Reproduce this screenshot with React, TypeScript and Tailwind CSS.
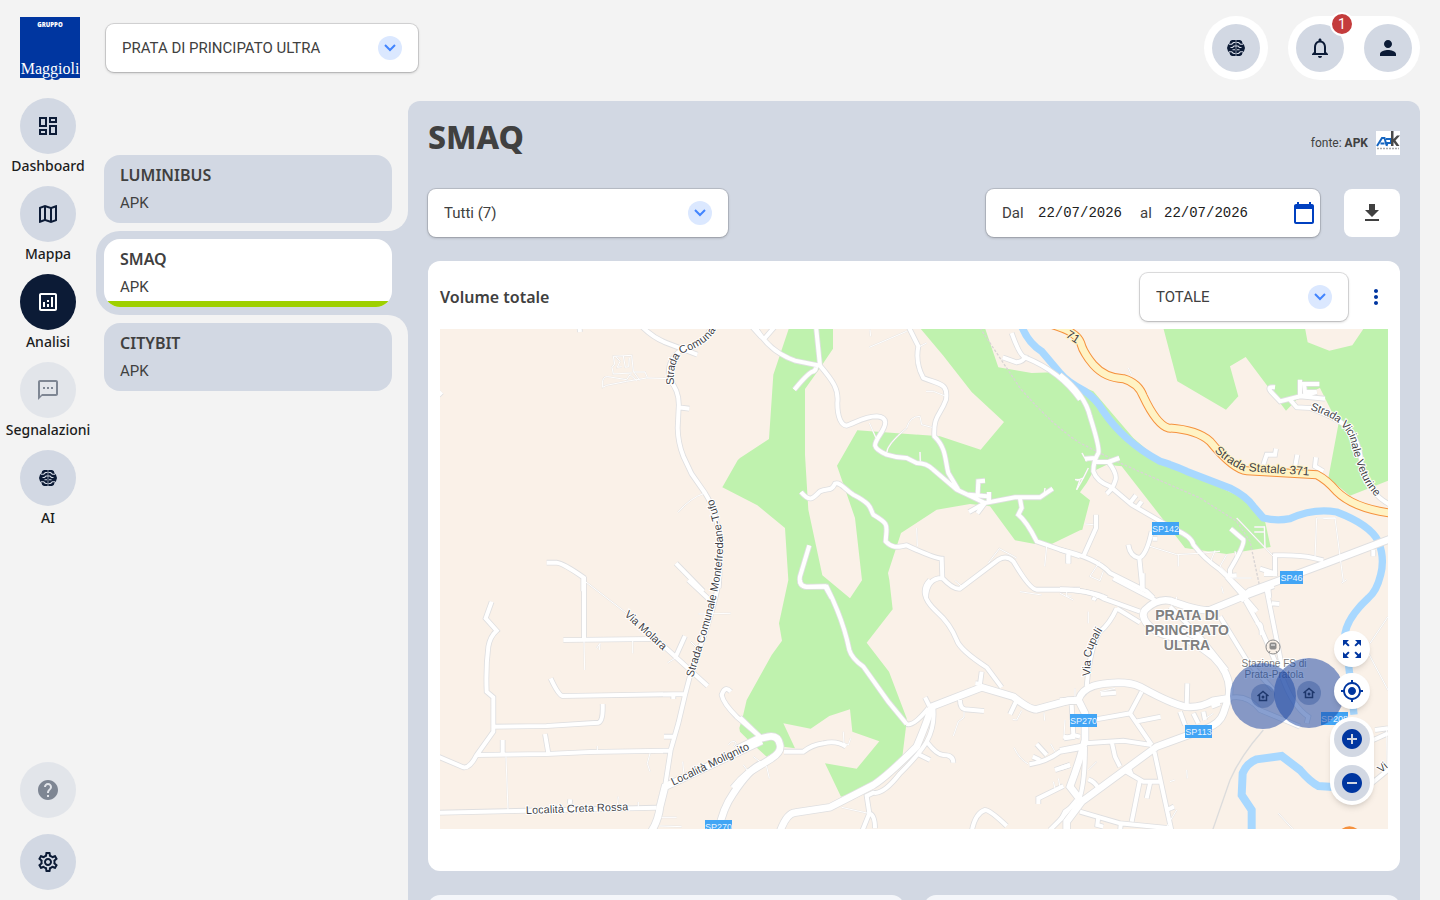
import type { ReactNode } from "react";
import {
    MdAddCircle,
    MdCalendarToday,
    MdDownload,
    MdHelp,
    MdMoreVert,
    MdMyLocation,
    MdNotificationsNone,
    MdOutlineAnalytics,
    MdOutlineDashboard,
    MdOutlineMap,
    MdOutlineSettings,
    MdOutlineTextsms,
    MdPerson,
    MdRemoveCircle,
    MdZoomOutMap,
} from "react-icons/md";

interface NavItem {
    label: string;
    icon: ReactNode;
    active?: boolean;
    disabled?: boolean;
}

interface MapTile {
    x: number;
    y: number;
    lanes?: string;
    streets: string;
    avenues?: string;
}

interface RoadLabel {
    id: string;
    text: string;
    d: string;
    large?: boolean;
}

const navItems: NavItem[] = [
    { label: "Dashboard", icon: <MdOutlineDashboard size={24} /> },
    { label: "Mappa", icon: <MdOutlineMap size={24} /> },
    { label: "Analisi", icon: <MdOutlineAnalytics size={24} />, active: true },
    { label: "Segnalazioni", icon: <MdOutlineTextsms size={24} />, disabled: true },
    { label: "AI", icon: <BrainIcon /> },
];

const sources = [
    { name: "LUMINIBUS", vendor: "APK" },
    { name: "SMAQ", vendor: "APK" },
    { name: "CITYBIT", vendor: "APK" },
];

// tile geometry is stored at three units per map pixel
const tiles: MapTile[] = [
    {
        x: 440,
        y: 328,
        lanes: "M795 495Q750 510 714 553M688 152L620 150L560 160L500 172L488 178L488 158Q492 142 510 147L560 155L570 140L590 158M575 135L520 138L516 118L524 108L520 85L575 82L580 130L600 158M528 86L540 100L532 118L545 116M550 84L556 118L566 116L568 90M580 132L615 132L622 148",
        streets:
            "M815 -5C795 40 770 60 735 62C700 75 680 110 688 155C715 185 718 215 716 240L713 300Q714 345 730 385L755 438L795 495C825 540 842 620 842 680L836 780M605 -5Q640 30 680 45L772 80M935 -5L965 28M716 238L748 242M320 704L350 704Q370 706 430 748L430 790M708 706L790 790M418 -5L420 12M-5 202L5 192",
    },
    {
        x: 440,
        y: 580,
        lanes: "M430 0L560 100M432 180L434 270M198 530L204 690M775 102L872 100M630 520L622 550L630 575M728 545L732 585M665 712L710 712M660 738L725 740M578 180L578 220M470 205L480 190L478 210M472 498L472 515M535 650L532 675M595 666L595 680M865 495Q880 475 888 490L880 500M752 185L772 205M683 248L705 235",
        streets:
            "M838 0C820 90 800 150 780 200L752 280L735 345L715 430L692 510L675 620M155 65L137 115L170 152Q150 170 145 200Q137 260 140 335L160 352L160 455L110 525Q90 565 70 562L-5 530M160 440L320 438L475 428Q490 425 488 372M110 525L320 522L450 516L692 512M188 480L188 522M315 462L325 520M672 470L705 470M332 295Q355 345 368 348L735 342M700 357L700 345M370 180L635 177M432 -10L432 178M640 170L803 318M735 168L708 228M745 0L820 70M-5 698L260 692L650 683M391 658L389 672M872 335Q855 315 845 345Q850 370 890 410L960 470",
        avenues: "M965 483L675 620L660 680Q655 725 630 760M835 760Q845 690 880 640Q930 565 965 552",
    },
    {
        x: 740,
        y: 328,
        lanes: "M388 58L500 10M390 5L392 25M440 375Q440 350 500 300Q510 265 540 265L545 290L575 298M388 285L408 330M540 372L541 400M530 600L532 655M558 190L580 190L618 205M745 705L778 662L830 690M920 655L914 715M915 480L912 500M645 758L665 775M540 55L560 45M1005 455L1020 455L1010 485",
        streets:
            "M45 -5Q85 70 165 98L240 113M75 30L105 -5M228 -5L240 113C280 160 297 185 292 225C292 270 305 292 320 293C345 285 375 265 410 265C445 268 440 290 420 320C400 350 395 360 440 380Q470 390 500 390L530 405Q560 405 580 425L650 485L735 525L825 508L900 508L938 482M228 118Q228 130 215 132Q200 140 163 185M505 -5L535 55Q525 105 550 150C600 170 625 165 618 215C600 265 580 260 583 325C620 360 615 400 625 435L655 485M183 492C210 525 220 510 240 490C265 480 275 490 285 467C300 460 315 485 340 500C400 530 390 545 400 560C450 590 440 590 437 640C460 665 480 655 500 652Q580 690 605 692L607 750Q640 785 660 782L775 695Q800 680 820 700Q870 785 890 785L1020 785M607 750Q560 750 558 810M735 458L715 460L713 500M685 500L745 505L747 525M747 492L747 525M687 552L735 525L712 556M840 512L845 540L835 560Q860 580 890 640L1020 685M985 678L985 707M208 652L180 745Q175 775 200 777L255 775L275 810M815 15Q840 85 855 88Q850 100 830 103L788 88M855 88Q960 130 1020 215",
    },
    {
        x: 740,
        y: 580,
        lanes: "M310 455L312 490L325 495M332 475L325 495M305 682L385 700M672 395L672 412L655 425L640 468M912 398L914 422M822 503Q840 540 865 552M840 35L905 45M980 30L980 48L995 48M40 530L80 560L88 595M10 555L25 575M845 392L830 420L818 418M932 492L945 515M975 420L972 470M1005 325L1005 350M940 605L945 625M955 595L960 620",
        streets:
            "M0 412L60 470M132 515L190 515Q215 495 250 490Q290 480 318 500M580 385Q585 440 560 485Q540 520 480 580Q430 645 400 638L380 648L388 700L366 755M388 700Q405 705 405 745M555 352L568 378M560 485Q590 525 610 525Q640 525 640 548M530 520L570 540M660 360Q660 385 675 388L732 393M828 365L810 403M720 312L725 275M706 310L720 312M785 322L740 262Q660 210 650 180Q630 130 590 95Q530 40 570 0M695 755Q705 700 735 690Q750 690 800 738M868 553Q920 545 960 515L1020 505M890 492L920 525M878 530L900 540M945 570L990 555M895 672L895 655L970 618M930 750L965 715L975 695L1010 670M995 375L1000 465Q990 475 970 470M1000 465L1020 470M500 432Q520 440 565 385M180 0Q180 20 200 20L260 20Q310 120 328 210Q335 235 370 260L445 365L500 432",
        avenues:
            "M-20 625Q0 600 30 575L95 535Q125 515 120 495Q115 465 85 470L50 478L-10 508M120 755Q140 700 165 698L270 682L400 615Q440 590 530 500Q560 430 575 380L725 322L820 350Q870 390 890 388L985 362L1020 362",
    },
    {
        x: 1060,
        y: 328,
        lanes: "M66 375L80 400M85 420L70 450L50 485M70 450L50 458M530 570L640 685M583 597L613 597M583 612L613 612M613 595L615 660M765 690L770 570L825 570L850 760M270 655L350 680L430 675L480 670M355 680L355 715M205 120L215 140M120 700L90 745L120 758L130 730M465 668L450 705M525 670L530 690M860 755L845 765M515 750L575 750M500 680L480 715L505 740M830 570L790 572M75 588L100 590",
        streets:
            "M0 140Q75 200 90 265Q120 360 115 375Q100 400 100 430Q110 460 150 475L215 530L345 605Q395 625 400 650Q430 690 480 725L555 795M75 392L108 390M145 402L178 390M105 402L145 402Q175 440 165 460Q160 480 140 498M228 502L210 525M245 520L230 540M108 560L108 600L70 685M0 665Q110 690 150 735L260 790L280 810M275 610Q260 680 238 690L248 790M238 690Q210 685 205 650M278 632L292 632M0 785Q80 785 140 810M25 680L25 705M512 602L550 635Q555 650 510 725L510 745M500 745L530 742M790 697L760 690Q720 680 645 682L645 745M600 722L650 738M612 738L650 738M625 780L628 810M645 178Q620 175 632 190L660 220L720 205L795 212M720 155L720 205L770 192L735 192L732 168L778 168M690 215L710 238L750 240Q860 280 880 320Q905 370 905 420Q930 500 990 530M610 410L620 380L645 380L648 362M705 418L712 380M790 430L765 415L768 388M940 665L940 685",
        avenues: "M990 633L800 705L570 790L540 815",
    },
    {
        x: 1060,
        y: 580,
        lanes: "M930 190L984 110M920 210L984 330M655 700L710 760M85 95L85 130M95 60L130 45M350 50L345 75M485 20L490 40M0 40L40 60M980 450L982 560M345 600L330 605M380 570L382 595M30 440L30 420M325 495L340 480M120 335L165 325M350 690L320 740M85 570L110 545M430 420L460 400",
        streets:
            "M0 28Q90 30 130 55L240 95M105 52L100 60M160 -5L285 60M248 -20L248 30M170 85Q150 130 120 155Q90 200 80 320M170 85L240 128M500 -10L590 95M480 110L560 240L640 330M555 60L600 140L670 300M620 30L650 180L670 280M635 70L658 72M330 80L420 170L500 270M360 150L440 190M590 135Q605 120 605 165M505 355Q560 340 600 390L720 440M670 300Q700 380 745 410L740 430M75 490L190 482L275 495M110 418L210 400L245 335M210 400L275 495M225 425L302 410M155 485L165 530L180 560M360 395L375 435M380 375L382 310M283 515L335 755M190 570L250 605L305 605M240 600L215 725M60 695L180 730L330 745M0 720L50 660M0 510L75 495M12 475L45 470M0 565L30 555M400 400L415 430M430 395L435 420M75 500Q75 600 60 650M122 342L168 338M260 655L270 610M320 690L342 680M85 598Q105 605 115 625M205 560L215 585M984 445L945 450M940 480L984 460M935 610Q960 590 990 565M115 710L112 735L130 740M182 735L180 755M455 380L480 370",
        avenues:
            "M0 365L55 360C70 315 120 310 175 308Q215 308 240 320Q330 370 375 380Q420 385 460 362L505 355Q520 290 460 230Q380 165 330 170C260 150 240 110 255 90Q290 55 330 62Q420 95 450 90L560 45L640 15M505 355L490 400Q480 430 440 445L290 500L65 665L20 725L20 760M55 360L75 400L75 480Q60 540 30 620L65 665",
    },
];

const roadLabels: RoadLabel[] = [
    {
        id: "montefredane",
        text: "Strada Comunale Montefredane-Tufo",
        d: "M690 677C708 620 720 580 720 545C720 525 713 508 708 492",
    },
    {
        id: "comunale",
        text: "Strada Comuna",
        d: "M671 385C669 362 677 351 688 348C701 342 707 338 712 330L730 306",
    },
    { id: "molara", text: "Via Molara", d: "M626 613L672 655" },
    { id: "molignito", text: "Località Molignito", d: "M672 783L762 740" },
    { id: "creta", text: "Località Creta Rossa", d: "M526 811L640 807" },
    { id: "cupali", text: "Via Cupali", d: "M1087 676L1088 656Q1091 640 1106 620" },
    {
        id: "statale",
        text: "Strada Statale 371",
        d: "M1216 449Q1232 463 1244 468L1318 473",
        large: true,
    },
    {
        id: "vicinale",
        text: "Strada Vicinale Veturine",
        d: "M1311 407C1335 414 1352 425 1355 446C1362 470 1364 484 1388 504",
    },
    { id: "south", text: "Vi", d: "M1379 771L1395 758" },
    { id: "north", text: "71", d: "M1067 334L1087 347", large: true },
];

const shields = [
    { text: "SP142", x: 1152, y: 522 },
    { text: "SP46", x: 1280, y: 571 },
    { text: "SP270", x: 1070, y: 714 },
    { text: "SP113", x: 1185, y: 725 },
    { text: "SP208", x: 1321, y: 712 },
    { text: "SP270", x: 705, y: 820 },
];

const stations = [
    { x: 1263, y: 696, r: 33 },
    { x: 1309, y: 693, r: 35 },
];

const WOODS =
    "M147 0L100 140L87 333L0 390L-7 397L-53 478L52 532L135 600L145 756L117 886L126 938L95 981L20 1116L8 1168L-2 1200L0 1211L25 1236L80 1286L130 1256L165 1261L130 1186L212 1202L268 1164L330 1144L337 1211L418 1240L350 1322L255 1306L303 1406L395 1371L430 1346L487 1286L498 1196L500 1171L447 1031L380 944L458 844L448 756L444 735L483 615L590 545L690 528L750 535L825 637L885 648L935 648L1020 607L1027 605L1050 517L1020 493L1040 465L1060 430L1100 410L1145 415L1270 575L1335 660L1460 678L1592 657L1575 580L1530 520L1400 460L1260 400L1180 330L1120 260L1060 190L1000 165L940 133L875 135L775 118L735 0L540 0L610 83L695 192L792 282L722 365L600 325L352 307L291 413L345 570L366 757L330 811L247 742L205 545L195 380L195 183L240 120L279 62L279 0Z";

const WOODS_EAST =
    "M310 0L352 160L498 245L535 205L510 115L557 87L678 248L720 205L780 180L835 290L805 450L870 503L990 456L990 0L912 0L877 52L808 68L743 43L735 0Z";

const RIVER =
    "M-115 -5Q-95 45 -55 70L0 135Q20 160 75 190Q110 215 130 250Q190 340 300 400Q350 415 380 430L510 480Q560 505 580 535L610 570Q650 580 690 572Q760 540 830 552Q930 590 955 640Q975 690 962 740Q950 790 925 810Q865 865 855 916L868 1030L882 1160";

const RIVER_SOUTH =
    "M575 765L575 690L545 645L548 580Q560 550 590 538L665 528L720 570Q750 605 775 618L830 622";

const STATE_ROAD =
    "M-30 -12Q50 10 62 45Q70 75 100 110Q135 150 190 152Q235 165 250 205Q290 290 325 300Q410 305 450 340Q520 425 560 428L770 440Q800 455 830 490Q880 540 990 555";

function BrainIcon() {
    return (
        <svg width="24" height="24" viewBox="0 0 24 24" fill="currentColor" aria-hidden="true">
            <path d="M11.700 4H8L6.200 5L5.400 7.500L4 8.700L3 12L4 15.300L5.400 16.500L6.200 19L8 20H11.700Z" />
            <path d="M12.300 4H16L17.800 5L18.600 7.500L20 8.700L21 12L20 15.300L18.600 16.500L17.800 19L16 20H12.300Z" />
            <g fill="none" stroke="#d2d8e3" strokeWidth="1.100">
                <path d="M5 8.200H7.700L9.500 6.500M9.500 6.500L11.500 6.500M19 8.200H16.300L14.500 6.500M14.500 6.500L12.500 6.500" />
                <path d="M5 15.800H7.700L9.500 17.500M9.500 17.500H11.500M19 15.800H16.300L14.500 17.500M14.500 17.500H12.500" />
                <path d="M6.500 11.500H8.500L10 10H14L15.500 11.500H17.500M8.500 13.800H11M15.500 13.800H13" />
            </g>
        </svg>
    );
}

function Logo() {
    return (
        <svg width="60" height="63" viewBox="0 0 60 63" role="img" aria-label="Gruppo Maggioli">
            <rect width="60" height="61" fill="#0036a0" />
            <ellipse cx="28" cy="60" rx="4" ry="3" fill="#0036a0" />
            <ellipse cx="36" cy="60" rx="4" ry="3" fill="#0036a0" />
            <text
                x="30"
                y="10"
                textAnchor="middle"
                fill="#fff"
                className="font-['Noto_Sans',sans-serif] text-[6px] font-black"
            >
                GRUPPO
            </text>
            <text
                x="30"
                y="57"
                textAnchor="middle"
                fill="#fff"
                className="font-['Liberation_Serif',serif] text-[16px]"
            >
                Maggioli
            </text>
        </svg>
    );
}

function ApkLogo() {
    return (
        <svg width="24" height="24" viewBox="0 0 24 24" role="img" aria-label="APK">
            <rect width="24" height="24" fill="#fff" />
            <path
                d="M1 15L6 7H8.500L10.500 14M4.500 12.500H8.500M10 8H15V12H11.500L10.500 15"
                fill="none"
                stroke="#1565c0"
                strokeWidth="2"
            />
            <path d="M15 0H17.500V8L21 4.500H24L19.500 9.500L23.500 15H20.500L17.500 11V15H15Z" fill="#4a4a4a" />
            <path d="M1 17.500H23" stroke="#aaa" strokeWidth="1.500" strokeDasharray="2 1" />
        </svg>
    );
}

function Dropdown({ label, option, className }: { label: string; option: string; className: string }) {
    return (
        <div
            className={`relative h-12 rounded-lg bg-white shadow-[0_0_0_1px_rgba(60,60,70,0.16),0_1px_3px_rgba(0,0,0,0.22)] ${className}`}
        >
            <select
                aria-label={label}
                className="h-full w-full appearance-none rounded-lg bg-transparent pr-12 pl-4 text-[15px] text-[#404040] outline-none"
            >
                <option>{option}</option>
            </select>
            <span className="pointer-events-none absolute top-3 right-4 flex h-6 w-6 items-center justify-center rounded-full bg-[#dbe8ff] text-[#4285ff]">
                <svg width="12" height="8" viewBox="0 0 12 8" fill="none" aria-hidden="true">
                    <path d="M1 1L6 6L11 1" stroke="currentColor" strokeWidth="2" />
                </svg>
            </span>
        </div>
    );
}

function TownMap() {
    return (
        <svg
            viewBox="440 329 948 500"
            preserveAspectRatio="xMidYMid slice"
            className="block h-[500px] w-full"
            role="img"
            aria-label="Mappa di Prata di Principato Ultra"
        >
            <rect x="440" y="329" width="948" height="500" fill="#faf1e8" />
            <g transform="translate(740 328) scale(0.333333)">
                <path d={WOODS} fill="#bff2ae" />
            </g>
            <g transform="translate(1060 328) scale(0.333333)" fill="none">
                <path d={WOODS_EAST} fill="#bff2ae" />
                <path d={RIVER} stroke="#a8d8ff" strokeWidth="22" />
                <path
                    d="M-240 0L-120 180Q-20 295 60 345L180 405L420 510L530 580L570 640L600 780"
                    stroke="#d8d4d4"
                    strokeWidth="4"
                    strokeDasharray="8 5"
                />
            </g>
            <g transform="translate(1060 580) scale(0.333333)" fill="none">
                <path d={RIVER_SOUTH} stroke="#a8d8ff" strokeWidth="24" />
                <path d="M610 450Q540 530 510 600L458 750" stroke="#dcdcdc" strokeWidth="4" />
            </g>
            {tiles.map((tile) => (
                <g
                    key={`casing-${tile.x}-${tile.y}`}
                    transform={`translate(${tile.x} ${tile.y}) scale(0.333333)`}
                    fill="none"
                    stroke="#dfdfe0"
                >
                    <path d={tile.lanes} strokeWidth="5" stroke="#e6e3e1" />
                    <path d={tile.streets} strokeWidth="17" />
                    <path d={tile.avenues} strokeWidth="25" />
                </g>
            ))}
            {tiles.map((tile) => (
                <g
                    key={`fill-${tile.x}-${tile.y}`}
                    transform={`translate(${tile.x} ${tile.y}) scale(0.333333)`}
                    fill="none"
                    stroke="#fff"
                >
                    <path d={tile.lanes} strokeWidth="3" />
                    <path d={tile.streets} strokeWidth="12" />
                    <path d={tile.avenues} strokeWidth="20" />
                </g>
            ))}
            <g transform="translate(1060 328) scale(0.333333)" fill="none">
                <path d={STATE_ROAD} stroke="#f5913e" strokeWidth="27" />
                <path d={STATE_ROAD} stroke="#fff3c4" strokeWidth="21" />
                <path d="M845 1508Q868 1490 892 1508" stroke="#f5913e" strokeWidth="8" />
            </g>

            <g className="font-['Liberation_Sans',Arial,sans-serif]" fill="#3f3f46">
                {roadLabels.map((road) => (
                    <g key={road.id}>
                        <path id={road.id} d={road.d} fill="none" />
                        <text
                            dy="3"
                            className={road.large ? "text-[12px]" : "text-[11px]"}
                            stroke={road.large ? "#fff3c4" : "#fff"}
                            strokeWidth="2"
                            paintOrder="stroke"
                        >
                            <textPath href={`#${road.id}`}>{road.text}</textPath>
                        </text>
                    </g>
                ))}
            </g>

            {shields.map((shield) => {
                const width = shield.text.length * 4 + 7;
                return (
                    <g key={`${shield.x}-${shield.y}`}>
                        <rect x={shield.x} y={shield.y} width={width} height="13" fill="#42a5f5" />
                        <text
                            x={shield.x + width / 2}
                            y={shield.y + 10}
                            textAnchor="middle"
                            fill="#e8f4ff"
                            className="font-['Liberation_Sans',Arial,sans-serif] text-[9px]"
                        >
                            {shield.text}
                        </text>
                    </g>
                );
            })}

            <g
                textAnchor="middle"
                className="font-['Liberation_Sans',Arial,sans-serif]"
                stroke="#fff"
                strokeWidth="2"
                paintOrder="stroke"
            >
                <g fill="#808080" className="text-[14px] font-bold">
                    <text x="1187" y="620">PRATA DI</text>
                    <text x="1187" y="635">PRINCIPATO</text>
                    <text x="1187" y="650">ULTRA</text>
                </g>
                <g fill="#7a7a7a" className="text-[10px]">
                    <text x="1274" y="667">Stazione FS di</text>
                    <text x="1274" y="678">Prata-Pratola</text>
                </g>
            </g>
            <g fill="none" stroke="#8c8c8c">
                <circle cx="1273" cy="647" r="7" fill="#faf1e8" />
                <rect x="1270" y="643" width="6" height="6" rx="1" fill="#8c8c8c" />
                <path d="M1271 645H1275" stroke="#fff" />
                <path d="M1270 651L1269 653M1276 651L1277 653" />
            </g>

            {stations.map((station) => (
                <g key={station.x} transform={`translate(${station.x} ${station.y})`}>
                    <circle r={station.r} fill="#1a47a5" fillOpacity="0.52" />
                    <circle r="12" fill="#2c5099" fillOpacity="0.4" />
                    <path
                        d="M-5.500 0L0 -4.500L5.500 0M-3.500 -1V4.500H3.500V-1"
                        fill="none"
                        stroke="#1e376c"
                        strokeWidth="1.500"
                    />
                    <circle cy="1" r="1.500" fill="#1e376c" />
                </g>
            ))}
        </svg>
    );
}

function MapControls() {
    return (
        <div className="absolute right-3.5 bottom-6 flex flex-col items-center text-[#0036a0]">
            <button
                type="button"
                aria-label="Schermo intero"
                className="mb-1.5 flex h-9 w-9 items-center justify-center rounded-full bg-white shadow-md"
            >
                <MdZoomOutMap size={24} />
            </button>
            <button
                type="button"
                aria-label="La mia posizione"
                className="mb-2 flex h-9 w-9 items-center justify-center rounded-full bg-white shadow-md"
            >
                <MdMyLocation size={24} />
            </button>
            <div className="flex flex-col gap-2 rounded-full bg-white p-1 shadow-md">
                <button
                    type="button"
                    aria-label="Ingrandisci"
                    className="flex h-9 w-9 items-center justify-center rounded-full bg-[#d2d8e3]"
                >
                    <MdAddCircle size={24} />
                </button>
                <button
                    type="button"
                    aria-label="Riduci"
                    className="flex h-9 w-9 items-center justify-center rounded-full bg-[#d2d8e3]"
                >
                    <MdRemoveCircle size={24} />
                </button>
            </div>
        </div>
    );
}

function Sidebar() {
    return (
        <aside className="flex w-24 shrink-0 flex-col items-center pt-[17px] pb-2.5">
            <a href="#home" className="mb-[18px] ml-1 block">
                <Logo />
            </a>
            <nav className="flex flex-col items-center gap-2">
                {navItems.map((item) => (
                    <button
                        key={item.label}
                        type="button"
                        disabled={item.disabled}
                        className="flex flex-col items-center text-[#1c1c1c]"
                    >
                        <span
                            className={`flex h-14 w-14 items-center justify-center rounded-full ${
                                item.active ? "bg-[#0c1b36] text-white" : "bg-[#d2d8e3] text-[#0c1b36]"
                            } ${item.disabled ? "opacity-50" : ""}`}
                        >
                            {item.icon}
                        </span>
                        <span className="text-sm leading-6 font-medium">{item.label}</span>
                    </button>
                ))}
            </nav>
            <div className="mt-auto flex flex-col gap-4 text-[#0c1b36]">
                <button
                    type="button"
                    aria-label="Aiuto"
                    disabled
                    className="flex h-14 w-14 items-center justify-center rounded-full bg-[#d2d8e3] opacity-50"
                >
                    <MdHelp size={24} />
                </button>
                <button
                    type="button"
                    aria-label="Impostazioni"
                    className="flex h-14 w-14 items-center justify-center rounded-full bg-[#d2d8e3]"
                >
                    <MdOutlineSettings size={24} />
                </button>
            </div>
        </aside>
    );
}

function TopBar() {
    return (
        <header className="flex h-[101px] shrink-0 items-start justify-between pt-4 pr-5 pl-2.5 font-['Roboto',sans-serif] text-[#0c1b36]">
            <Dropdown label="Comune" option="PRATA DI PRINCIPATO ULTRA" className="mt-2 w-[312px]" />
            <div className="flex gap-5">
                <div className="rounded-full bg-white p-2">
                    <button
                        type="button"
                        aria-label="Assistente AI"
                        className="flex h-12 w-12 items-center justify-center rounded-full bg-[#d2d8e3]"
                    >
                        <BrainIcon />
                    </button>
                </div>
                <div className="flex gap-5 rounded-full bg-white p-2">
                    <button
                        type="button"
                        aria-label="Notifiche"
                        className="relative flex h-12 w-12 items-center justify-center rounded-full bg-[#d2d8e3]"
                    >
                        <MdNotificationsNone size={24} />
                        <span className="absolute -top-3 -right-2.5 flex h-6 w-6 items-center justify-center rounded-full border-2 border-white bg-[#c43c3c] text-sm text-white">
                            1
                        </span>
                    </button>
                    <button
                        type="button"
                        aria-label="Profilo"
                        className="flex h-12 w-12 items-center justify-center rounded-full bg-[#d2d8e3]"
                    >
                        <MdPerson size={24} />
                    </button>
                </div>
            </div>
        </header>
    );
}

function SourceList() {
    const selected = 1;
    return (
        <nav className="flex w-[312px] shrink-0 flex-col bg-[#d2d8e3]">
            <div className="h-[46px] bg-[#f3f3f3]" />
            {sources.map((source, i) => (
                <div
                    key={source.name}
                    className={
                        i === selected
                            ? "bg-[linear-gradient(to_right,#f3f3f3_50%,#d2d8e3_50%)]"
                            : `bg-[#f3f3f3] ${i === selected - 1 ? "rounded-br-[20px]" : "rounded-tr-[20px]"}`
                    }
                >
                    <div className={`py-2 pr-4 pl-2 ${i === selected ? "rounded-l-3xl bg-[#d2d8e3]" : ""}`}>
                        <button
                            type="button"
                            className={`relative flex h-[68px] w-full flex-col overflow-hidden rounded-2xl px-4 pt-2 text-left text-[#404040] ${
                                i === selected ? "bg-white" : "bg-[#d2d8e3]"
                            }`}
                        >
                            <span className="text-base leading-6 font-semibold">{source.name}</span>
                            <span className="mt-1 font-['Roboto',sans-serif] text-[15px] leading-6">
                                {source.vendor}
                            </span>
                            {i === selected && (
                                <span className="absolute inset-x-0 bottom-0 h-1.5 bg-[#9ed000]" />
                            )}
                        </button>
                    </div>
                </div>
            ))}
            <div className="grow bg-[#f3f3f3]" />
        </nav>
    );
}

function DateRange() {
    return (
        <div className="flex h-12 w-[334px] items-center rounded-lg bg-white pr-1 pl-4 text-[#404040] shadow-[0_0_0_1px_rgba(60,60,70,0.16),0_1px_3px_rgba(0,0,0,0.22)]">
            <label htmlFor="from" className="w-9 text-[15px]">
                Dal
            </label>
            <input
                id="from"
                defaultValue="22/07/2026"
                className="w-[102px] font-['Liberation_Mono',monospace] text-sm text-[#202020] outline-none"
            />
            <label htmlFor="to" className="w-6 text-[15px]">
                al
            </label>
            <input
                id="to"
                defaultValue="22/07/2026"
                className="w-[102px] font-['Liberation_Mono',monospace] text-sm text-[#202020] outline-none"
            />
            <button type="button" aria-label="Apri calendario" className="ml-auto text-[#0040c0]">
                <MdCalendarToday size={24} />
            </button>
        </div>
    );
}

export default function App() {
    return (
        <div className="flex h-screen overflow-hidden bg-[#f3f3f3] font-['Noto_Sans',sans-serif] text-[#404040]">
            <Sidebar />
            <div className="flex min-w-0 grow flex-col">
                <TopBar />
                <div className="flex min-h-0 grow">
                    <SourceList />
                    <main className="mr-5 min-w-0 grow overflow-y-auto rounded-t-xl bg-[#d2d8e3] px-5 pt-3 [scrollbar-width:none]">
                        <div className="flex h-12 items-center justify-between">
                            <h1 className="text-[32px] leading-[44px] font-extrabold">SMAQ</h1>
                            <p className="mt-3 flex items-center gap-2 font-['Roboto',sans-serif] text-xs">
                                <span>
                                    fonte: <b>APK</b>
                                </span>
                                <ApkLogo />
                            </p>
                        </div>

                        <div className="mt-7 flex items-center font-['Roboto',sans-serif]">
                            <Dropdown label="Sensori" option="Tutti (7)" className="mr-auto w-[300px]" />
                            <DateRange />
                            <button
                                type="button"
                                aria-label="Scarica"
                                className="ml-6 flex h-12 w-14 items-center justify-center rounded-lg bg-white"
                            >
                                <MdDownload size={24} />
                            </button>
                        </div>

                        <section className="mt-6 rounded-xl bg-white px-3 pt-3 pb-[42px]">
                            <div className="mb-2 flex items-center">
                                <h2 className="mr-auto text-base font-semibold">Volume totale</h2>
                                <div className="font-['Roboto',sans-serif]">
                                    <Dropdown label="Tipo" option="TOTALE" className="w-[208px]" />
                                </div>
                                <button type="button" aria-label="Altre azioni" className="ml-4 text-[#0036a0]">
                                    <MdMoreVert size={24} />
                                </button>
                            </div>
                            <div className="relative">
                                <TownMap />
                                <MapControls />
                            </div>
                        </section>

                        <div className="mt-6 grid grid-cols-2 gap-5">
                            <section className="h-80 rounded-xl bg-[#f4f6fa]" />
                            <section className="h-80 rounded-xl bg-[#f4f6fa]" />
                        </div>
                    </main>
                </div>
            </div>
        </div>
    );
}
